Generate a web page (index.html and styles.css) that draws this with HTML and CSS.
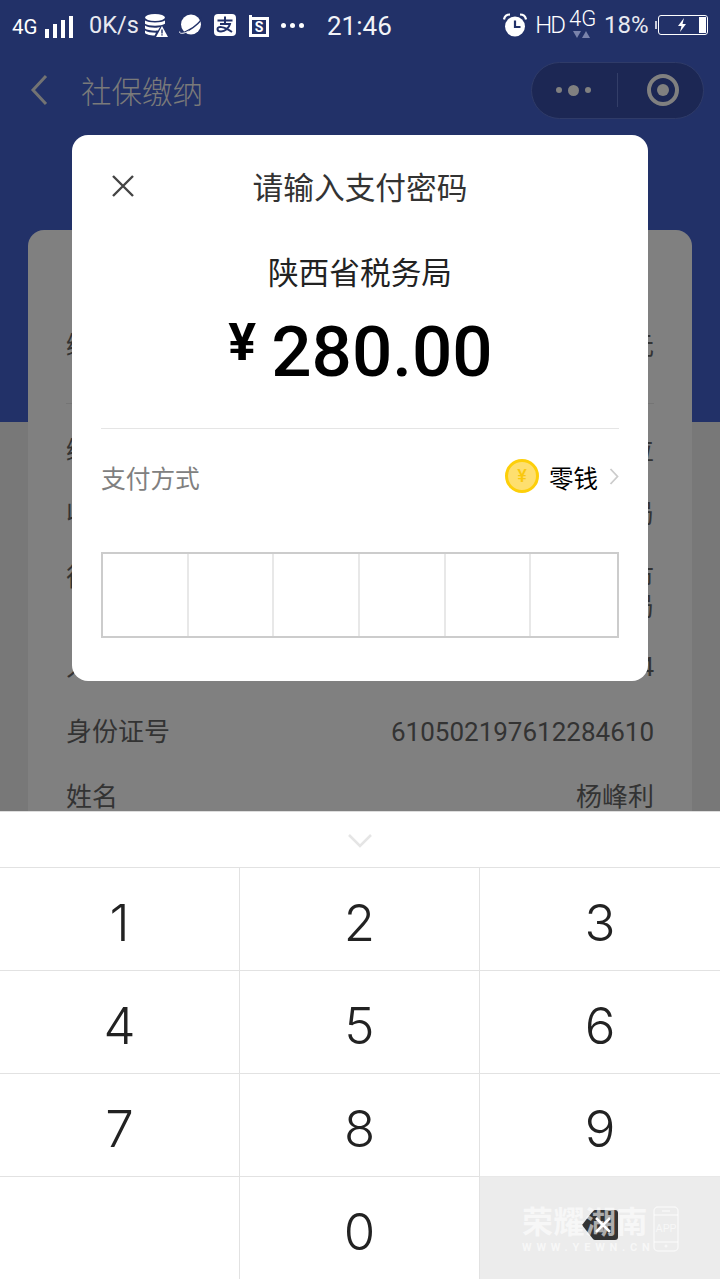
FILE: index.html
```html
<!DOCTYPE html>
<html lang="zh-CN">
<head>
    <meta charset="UTF-8">
    <meta name="viewport" content="width=device-width, initial-scale=1.0">
    <title>社保缴纳</title>
    <link rel="stylesheet" href="styles.css">
</head>
<body>
    <div class="page">
        <div class="status-bar">
            <div class="status-left">
                <span class="net">4G</span>
                <div class="signal"><i class="s1"></i><i class="s2"></i><i class="s3"></i><i class="s4"></i></div>
                <span class="speed">0K/s</span>
                <svg class="ico ico-db" width="23" height="23" viewBox="0 0 23 23">
                    <ellipse cx="10" cy="3.5" rx="10" ry="3.5" fill="#fff"/>
                    <path d="M0 6.5c3 2.6 17 2.6 20 0v3.2c-3 2.6-17 2.6-20 0zM0 11.5c3 2.6 13 2.6 15 1.5l-2 3.6c-5 .4-11-.4-13-2zM0 16.5c2 1.6 6 2.2 11 2.2l-1.4 2.8c-5 0-8.600-1.200-9.600-2.500z" fill="#fff"/>
                    <path d="M17 12l6 11H11z" fill="#fff"/>
                    <path d="M16.300 15.500h1.400v4h-1.400zM16.300 20.200h1.400v1.300h-1.400z" fill="#223168"/>
                </svg>
                <svg class="ico ico-planet" width="23" height="23" viewBox="0 0 23 23">
                    <circle cx="12" cy="10.500" r="10" fill="#fff"/>
                    <path d="M22 3.500c1.600 3-6.500 9.500-12 12.500-4 2.200-8.500 4-9.500 2.800" fill="none" stroke="#223168" stroke-width="1.500"/>
                    <path d="M.7 17.500c-1 2.500 4 2.500 9-.5" fill="none" stroke="#fff" stroke-width="1"/>
                </svg>
                <svg class="ico ico-ali" width="22" height="22" viewBox="0 0 22 22">
                    <rect width="22" height="22" rx="4" fill="#fff"/>
                    <path d="M3.500 6.500h15M11 2.500v7M6 10h10c-1 4-5 7.500-9 7.500-2.500 0-3.500-1.300-3.500-2.500 0-3 6-3 14.500 3" fill="none" stroke="#223168" stroke-width="2"/>
                </svg>
                <svg class="ico ico-sim" width="20" height="23" viewBox="0 0 20 23">
                    <path d="M1.500 1v20.500h17V4.500H1.500" fill="none" stroke="#fff" stroke-width="3"/>
                    <text x="10" y="18" text-anchor="middle" class="sim-s">S</text>
                </svg>
                <div class="more"><i></i><i></i><i></i></div>
                <span class="clock">21:46</span>
            </div>
            <div class="status-right">
                <svg class="ico" width="24" height="24" viewBox="0 0 24 24">
                    <circle cx="12" cy="13.500" r="10" fill="#fff"/>
                    <path d="M12 7.500v6.500h5.500" fill="none" stroke="#223168" stroke-width="2.200"/>
                    <path d="M1 6.500C1.500 3.500 4 1.500 7 1.500M23 6.500c-.5-3-3-5-6-5" fill="none" stroke="#fff" stroke-width="2.200"/>
                </svg>
                <span class="hd">HD</span>
                <div class="net2">
                    <span>4G</span>
                    <div class="arrows"><i class="down"></i><i class="up"></i></div>
                </div>
                <span class="percent">18%</span>
                <div class="battery">
                    <svg width="14" height="14" viewBox="0 0 14 14"><path d="M9 0L3 8h3.500L5 14l6-8H7.500z" fill="#fff"/></svg>
                    <i class="level"></i>
                </div>
            </div>
        </div>

        <div class="nav">
            <svg class="back" width="18" height="32" viewBox="0 0 18 32">
                <path d="M16 2L3 16l13 14" fill="none" stroke="#737373" stroke-width="3"/>
            </svg>
            <span class="nav-title">社保缴纳</span>
            <div class="capsule">
                <div class="capsule-dots"><i></i><i class="big"></i><i></i></div>
                <div class="capsule-ring"><i></i></div>
            </div>
        </div>

        <div class="content">
            <div class="card">
                <div class="row row-head"><span>缴费金额</span><span>280.00元</span></div>
                <div class="rows rows-a">
                    <div class="row"><span>缴费单位</span><span>单位</span></div>
                    <div class="row"><span>收款单位</span><span>陕西省税务局</span></div>
                    <div class="row row-tall"><span>征收机关</span><span>国家税务总局渭南市<br>临渭区税务局</span></div>
                </div>
                <div class="rows rows-b">
                    <div class="row"><span>人员编号</span><span>1234</span></div>
                    <div class="row"><span>身份证号</span><span>610502197612284610</span></div>
                    <div class="row"><span>姓名</span><span>杨峰利</span></div>
                </div>
            </div>
        </div>

        <div class="keyboard">
            <div class="kb-hide">
                <svg width="26" height="15" viewBox="0 0 26 15"><path d="M2 2l11 11L24 2" fill="none" stroke="#e5e5e5" stroke-width="2.500"/></svg>
            </div>
            <div class="keys">
                <div class="key">1</div>
                <div class="key">2</div>
                <div class="key">3</div>
                <div class="key">4</div>
                <div class="key">5</div>
                <div class="key">6</div>
                <div class="key">7</div>
                <div class="key">8</div>
                <div class="key">9</div>
                <div class="key"></div>
                <div class="key">0</div>
                <div class="key key-del">
                    <svg width="36" height="30" viewBox="0 0 36 30">
                        <path d="M0 15L11 1q1-1 2-1h20q3 0 3 3v24q0 3-3 3H13q-1 0-2-1z" fill="#333"/>
                        <path d="M14 8l14 14M28 8L14 22" stroke="#fff" stroke-width="2.500"/>
                    </svg>
                </div>
            </div>
        </div>

        <div class="modal">
            <div class="modal-head">
                <svg class="close" width="24" height="24" viewBox="0 0 24 24">
                    <path d="M2 2l20 20M22 2L2 22" stroke="#444" stroke-width="2.400"/>
                </svg>
                <span class="modal-title">请输入支付密码</span>
            </div>
            <div class="payee">陕西省税务局</div>
            <div class="amount"><span class="yen">¥</span><span class="sum">280.00</span></div>
            <div class="pay-way">
                <span class="pay-label">支付方式</span>
                <div class="pay-choice">
                    <span class="coin">¥</span>
                    <span class="pay-name">零钱</span>
                    <svg width="10" height="17" viewBox="0 0 10 17"><path d="M1.500 1l7 7.500-7 7.500" fill="none" stroke="#ccc" stroke-width="1.800"/></svg>
                </div>
            </div>
            <div class="pin-box"><i></i><i></i><i></i><i></i><i></i><i></i></div>
        </div>

        <div class="watermark">
            <div class="wm-text">
                <div class="wm-name">荣耀湖南</div>
                <div class="wm-url">WWW.YEWN.CN</div>
            </div>
            <svg width="26" height="46" viewBox="0 0 26 46">
                <rect x="1" y="1" width="24" height="44" rx="4" fill="none" stroke="#fff" stroke-opacity=".6" stroke-width="1.500"/>
                <path d="M1 9h24M1 36h24M9 5h8" stroke="#fff" stroke-opacity=".6" stroke-width="1.500"/>
                <circle cx="13" cy="40" r="1.500" fill="#fff" fill-opacity=".6"/>
                <text x="13" y="26" text-anchor="middle" class="wm-app">APP</text>
            </svg>
        </div>
    </div>
</body>
</html>
```

FILE: styles.css
```css
* { box-sizing: border-box; }
body { margin: 0; font-family: Roboto, 'Noto Sans CJK SC', sans-serif; }
i { display: block; }
.page { position: relative; width: 720px; height: 1280px; overflow: hidden; display: flex; flex-direction: column; background: #787878; }

/* status bar */
.status-bar { height: 50px; padding: 0 12px; display: flex; justify-content: space-between; align-items: center; background: #223168; color: #fff; }
.status-left, .status-right { display: flex; align-items: center; }
.net { font-size: 20.500px; margin-top: 4px; width: 33px; }
.signal { display: flex; align-items: flex-end; gap: 4px; height: 22px; margin-top: 4px; }
.signal i { width: 4px; background: #fff; }
.s1 { height: 9px; }
.s2 { height: 14px; }
.s3 { height: 18px; }
.s4 { height: 22px; }
.speed { font-size: 23.500px; margin-left: 16px; width: 56px; color: #e8e9f0; }
.ico { display: block; }
.ico-planet { margin-left: 11px; }
.ico-ali { margin-left: 12px; }
.ico-sim { margin-left: 13px; }
.sim-s { font: 700 14px Roboto, sans-serif; fill: #fff; }
.more { display: flex; gap: 4px; margin-left: 12px; width: 46px; }
.more i { width: 5px; height: 5px; border-radius: 50%; background: #fff; }
.clock { font-size: 26px; color: #f2f3f7; margin-top: 2px; }
.hd { font-size: 24px; font-weight: 300; margin-left: 8px; letter-spacing: -2px; }
.net2 { margin-left: 5px; width: 35px; display: flex; flex-direction: column; align-items: flex-start; font-size: 22px; line-height: 20px; height: 32px; font-weight: 300; }
.arrows { display: flex; gap: 1px; margin: 2px 0 0 4px; }
.arrows i { border-left: 4px solid transparent; border-right: 4px solid transparent; }
.down { border-top: 7px solid #7a83ab; }
.up { border-bottom: 7px solid #7a83ab; }
.percent { font-size: 24px; width: 54px; color: #e8e9f0; }
.battery { position: relative; width: 50px; height: 20px; border: 1.500px solid #fff; border-radius: 3px; display: flex; align-items: center; justify-content: center; padding-right: 3px; }
.battery::before { content: ''; position: absolute; left: -4px; top: 5px; width: 2px; height: 8px; background: #c8cbdb; }
.level { position: absolute; right: 1px; top: 1px; bottom: 1px; width: 7px; background: #fff; }

/* nav */
.nav { height: 80px; padding: 0 16px 0 30px; display: flex; align-items: center; background: #223168; }
.back { display: block; }
.nav-title { margin-left: 33px; font-size: 30.500px; font-weight: 300; color: #7a7a7a; }
.capsule { margin-left: auto; width: 173px; height: 57px; border: 1px solid #2f3b68; border-radius: 29px; background: #1c2754; display: flex; align-items: center; }
.capsule-dots { width: 85px; height: 34px; display: flex; align-items: center; justify-content: flex-end; gap: 6px; padding-right: 26px; }
.capsule-dots i { width: 6px; height: 6px; border-radius: 50%; background: #808080; }
.capsule-dots .big { width: 11px; height: 11px; }
.capsule-ring { flex: 1; height: 34px; padding-left: 4px; border-left: 1px solid #333e68; display: flex; align-items: center; justify-content: center; }
.capsule-ring i { width: 32px; height: 32px; border: 4px solid #808080; border-radius: 50%; position: relative; }
.capsule-ring i::after { content: ''; position: absolute; left: 6px; top: 6px; width: 12px; height: 12px; border-radius: 50%; background: #808080; }

/* dimmed page under the dialog */
.content { flex: 1; min-height: 0; overflow: hidden; padding: 100px 28px 0; background: linear-gradient(#223168 292px, #787878 292px); }
.card { background: #808080; border-radius: 16px 16px 0 0; padding: 0 38px; height: 800px; color: #333; font-size: 26px; }
.row { display: flex; justify-content: space-between; line-height: 30px; }
.row span:last-child { text-align: right; }
.row-head { padding: 101px 0 42px; border-bottom: 1px solid #757575; }
.rows { display: flex; flex-direction: column; }
.rows-a { gap: 33px; padding-top: 32px; }
.rows-b { gap: 35px; padding-top: 30px; }

/* number keyboard */
.keyboard { height: 469px; background: #fff; border-top: 1px solid #ddd; }
.kb-hide { height: 55px; display: flex; align-items: center; justify-content: center; padding-top: 1px; }
.kb-hide svg { display: block; }
.keys { display: grid; grid-template-columns: 240px 240px 240px; grid-auto-rows: 103px; }
.key { border-top: 1px solid #e2e2e2; border-right: 1px solid #e2e2e2; display: flex; align-items: center; justify-content: center; padding-top: 7px; font-family: Inter, Roboto, sans-serif; font-size: 51px; font-weight: 300; color: #222; }
.key:nth-child(3n) { border-right: 0; }
.key-del { background: #ececec; padding: 0 0 6px; border-top-color: #e8e8e8; }

/* payment dialog */
.modal { position: absolute; left: 72px; top: 135px; width: 576px; height: 546px; padding: 0 29px; background: #fff; border-radius: 16px; }
.modal-head { position: relative; height: 102px; padding-bottom: 2px; display: flex; align-items: center; justify-content: center; }
.close { position: absolute; left: 10px; top: 39px; }
.modal-title { font-size: 30.700px; color: #333; }
.payee { font-size: 30.700px; line-height: 44px; color: #222; text-align: center; margin-top: 15px; }
.amount { display: flex; justify-content: center; align-items: flex-start; height: 92px; margin-top: 14px; padding-left: 1px; color: #000; }
.yen { font-size: 52px; font-weight: 700; line-height: 66px; margin-right: 15px; }
.sum { font-size: 71px; font-weight: 500; line-height: 84px; }
.pay-way { margin-top: 26px; padding-bottom: 5px; border-top: 1px solid #e5e5e5; display: flex; justify-content: space-between; align-items: center; height: 102px; }
.pay-label { font-size: 24.700px; color: #808080; }
.pay-choice { display: flex; align-items: center; margin-top: -2px; }
.coin { width: 34px; height: 34px; margin-right: 10px; border: 3px solid #fdcf0a; border-radius: 50%; background: #fedf6f; color: #f9c80e; font-size: 18px; font-weight: 500; line-height: 28px; text-align: center; }
.pay-name { font-size: 24.500px; color: #000; margin-right: 11px; margin-top: 2px; }
.pin-box { margin-top: 22px; height: 86px; display: grid; grid-template-columns: repeat(6, 1fr); border: 2px solid #ccc; }
.pin-box i { border-right: 2px solid #e8e8e8; }
.pin-box i:last-child { border-right: 0; }

/* watermark over the delete key */
.watermark { position: absolute; left: 522px; top: 1206px; display: flex; align-items: flex-start; gap: 5px; }
.wm-text { width: 126px; }
.wm-name { font-size: 31px; font-weight: 700; line-height: 34px; color: rgba(255, 255, 255, .6); white-space: nowrap; letter-spacing: .5px; }
.wm-url { margin-top: 1px; font-size: 11px; font-weight: 700; line-height: 14px; letter-spacing: 4.800px; color: rgba(255, 255, 255, .6); white-space: nowrap; }
.wm-app { font: 400 11px Roboto, sans-serif; fill: rgba(255, 255, 255, .6); }
```
